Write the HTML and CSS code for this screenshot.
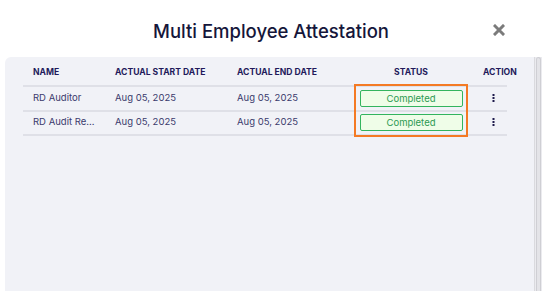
FILE: index.html
```html
<!DOCTYPE html>
<html lang="en">
<head>
<meta charset="utf-8">
<title>Multi Employee Attestation</title>
<link rel="stylesheet" href="styles.css">
</head>
<body>
<div class="modal">
  <header class="modal-header">
    <h1 class="modal-title">Multi Employee Attestation</h1>
    <button class="close-btn" aria-label="Close">
      <svg width="12" height="12" viewBox="0 0 12 12"><path d="M2 2 L10 10 M10 2 L2 10" stroke="#7b7b7b" stroke-width="3" stroke-linecap="square"/></svg>
    </button>
  </header>
  <div class="panel-wrap">
    <div class="panel">
      <div class="table">
        <div class="row head">
          <div class="cell">NAME</div>
          <div class="cell">ACTUAL START DATE</div>
          <div class="cell">ACTUAL END DATE</div>
          <div class="cell center">STATUS</div>
          <div class="cell">ACTION</div>
        </div>
        <div class="row">
          <div class="cell text">RD Auditor</div>
          <div class="cell text">Aug 05, 2025</div>
          <div class="cell text">Aug 05, 2025</div>
          <div class="cell center"><span class="badge">Completed</span></div>
          <div class="cell action"><svg width="3" height="8" viewBox="0 0 3 8"><rect x="0.5" y="0" width="2" height="2" fill="#1e1a4c"/><rect x="0.5" y="3" width="2" height="2" fill="#1e1a4c"/><rect x="0.5" y="6" width="2" height="2" fill="#1e1a4c"/></svg></div>
        </div>
        <div class="row">
          <div class="cell text">RD Audit Re...</div>
          <div class="cell text">Aug 05, 2025</div>
          <div class="cell text">Aug 05, 2025</div>
          <div class="cell center"><span class="badge">Completed</span></div>
          <div class="cell action"><svg width="3" height="8" viewBox="0 0 3 8"><rect x="0.5" y="0" width="2" height="2" fill="#1e1a4c"/><rect x="0.5" y="3" width="2" height="2" fill="#1e1a4c"/><rect x="0.5" y="6" width="2" height="2" fill="#1e1a4c"/></svg></div>
        </div>
        <div class="highlight"></div>
      </div>
    </div>
    <div class="scrollbar"><div class="thumb"></div></div>
  </div>
</div>
</body>
</html>
```
FILE: styles.css
```css
* { box-sizing: border-box; }
html, body { margin: 0; padding: 0; }
body {
  background: #ffffff;
  font-family: Inter, "Noto Sans", sans-serif;
  width: 542px;
  height: 291px;
  overflow: hidden;
}
.modal { display: flex; flex-direction: column; height: 291px; }
.modal-header {
  flex: 0 0 57px;
  display: flex;
  align-items: center;
  justify-content: center;
  position: relative;
  padding-top: 5px;
}
.modal-title {
  margin: 0;
  font-size: 18.5px;
  font-weight: 500;
  color: #15163a;
  letter-spacing: 0;
}
.close-btn {
  position: absolute;
  right: 37px;
  top: 24px;
  border: 0;
  background: none;
  padding: 0;
  width: 12px;
  height: 12px;
  display: flex;
}
.panel-wrap {
  flex: 1 1 auto;
  min-height: 0;
  display: flex;
  margin-left: 5px;
}
.panel {
  flex: 1;
  background: #f1f2f7;
  border-top-left-radius: 6px;
  padding: 0 27px 0 18px;
}
.scrollbar {
  width: 8px;
  background: #ebebef;
  border-left: 1px solid #dadade;
  padding: 0 1px;
}
.thumb {
  height: 100%;
  background: #e4e4e8;
  border: 1px solid #cfcfd4;
  border-bottom: 0;
  border-radius: 4px 4px 0 0;
}
.table { position: relative; }
.row {
  display: grid;
  grid-template-columns: 82px 122px 122px 124px 33px;
  border-bottom: 2px solid #dfe0e7;
  height: 24.5px;
  align-items: center;
  font-size: 9.5px;
  color: #3a3a6c;
}
.row.head {
  height: 30px;
  padding-top: 2px;
  font-size: 8.6px;
  font-weight: 700;
  color: #22195a;
}
.cell { padding-left: 10px; white-space: nowrap; }
.cell.text { padding-bottom: 2px; }
.cell.center { padding-left: 0; text-align: center; display: flex; justify-content: center; }
.cell.action { padding-left: 19px; display: flex; padding-bottom: 1px; }
.badge {
  display: inline-block;
  width: 103px;
  height: 17px;
  line-height: 15px;
  background: #effde8;
  border: 1px solid #33b45e;
  border-radius: 2px;
  color: #2b9a51;
  font-size: 9.5px;
  text-align: center;
}
.highlight {
  position: absolute;
  left: 331px;
  top: 27px;
  width: 114px;
  height: 53px;
  border: 2px solid #f47a24;
  pointer-events: none;
}
```
